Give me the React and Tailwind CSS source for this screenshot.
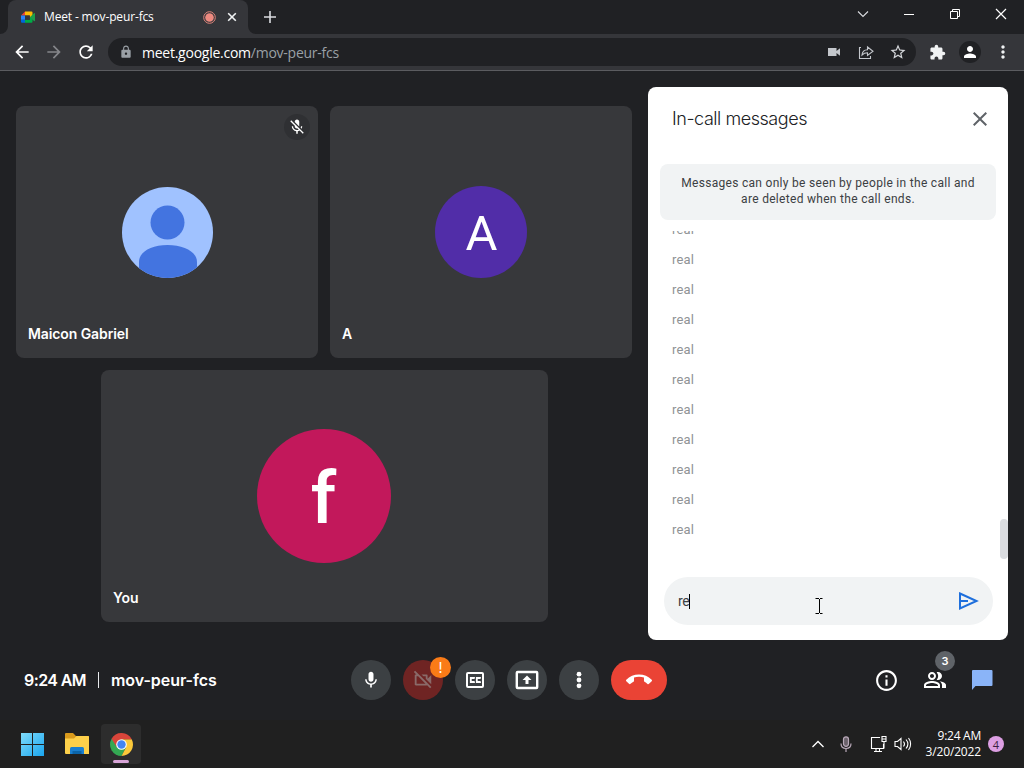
import {
    MdArrowBack,
    MdArrowForward,
    MdCallEnd,
    MdClose,
    MdExtension,
    MdInfoOutline,
    MdLock,
    MdMic,
    MdMicOff,
    MdMoreVert,
    MdOutlinePeopleAlt,
    MdOutlineVideocamOff,
    MdPerson,
    MdRefresh,
    MdStarBorder
} from 'react-icons/md';

const messages = Array.from({ length: 11 }, (_, i) => ({ id: i, text: 'real' }));

const MeetLogo = () => (
    <svg className="w-4 h-4" viewBox="0 0 16 16">
        <path d="M1 6.500 5 2.500v4z" fill="#ea4335" />
        <path d="M5 2.500h6.500a1 1 0 0 1 1 1v3L9.800 9V6.500H5z" fill="#fbbc04" />
        <path d="M1 6.500h4v4.300H1z" fill="#2684fc" />
        <path d="M1 10.800h4v3H2a1 1 0 0 1-1-1z" fill="#0066da" />
        <path d="M5 10.800h4.800V8l2.700 2v2.800a1 1 0 0 1-1 1H5z" fill="#00ac47" />
        <path d="m9.800 8.200 4.200-4c.5-.4 1-.2 1 .4v7c0 .6-.5.800-1 .4z" fill="#1e9e4a" />
        <path d="M5 6.500h4.800v4.300H5z" fill="#35363a" />
    </svg>
);

const TabStrip = () => (
    <div className="h-[34px] flex items-stretch bg-[#202124] font-['Open_Sans',sans-serif]">
        <div className="relative ml-2 w-60 flex items-center bg-[#35363a] rounded-t-lg pl-3 pr-2 text-white">
            <svg className="absolute -left-2 bottom-0 w-2 h-2" viewBox="0 0 8 8">
                <path d="M8 0v8H0a8 8 0 0 0 8-8z" fill="#35363a" />
            </svg>
            <svg className="absolute -right-2 bottom-0 w-2 h-2" viewBox="0 0 8 8">
                <path d="M0 0v8h8a8 8 0 0 1-8-8z" fill="#35363a" />
            </svg>
            <MeetLogo />
            <span className="ml-2 flex-1 text-[12px] tracking-[-0.15px] whitespace-nowrap">Meet - mov-peur-fcs</span>
            <svg className="mr-2 w-[13px] h-[13px]" viewBox="0 0 13 13">
                <circle cx="6.500" cy="6.500" r="5.800" fill="none" stroke="#e0857c" />
                <circle cx="6.500" cy="6.500" r="4.300" fill="#ee8a80" />
            </svg>
            <svg className="w-4 h-4" viewBox="0 0 16 16" fill="none" stroke="#f1f3f4" strokeWidth="1.600">
                <path d="m4.200 4.200 7.600 7.600m0-7.600-7.600 7.600" />
            </svg>
        </div>
        <svg className="ml-[14px] mt-[9px] w-4 h-4" viewBox="0 0 16 16" fill="none" stroke="#dadce0" strokeWidth="1.600">
            <path d="M8 2v12M2 8h12" />
        </svg>
        <div className="ml-auto flex text-white">
            <svg className="w-[46px] h-7" viewBox="0 0 46 28" fill="none" stroke="#dadce0" strokeWidth="1.100">
                <path d="m18 11.500 5 5 5-5" />
            </svg>
            <svg className="w-[46px] h-7" viewBox="0 0 46 28" fill="none" stroke="currentColor">
                <path d="M18 14.500h10" />
            </svg>
            <svg className="w-[46px] h-7" viewBox="0 0 46 28" fill="none" stroke="currentColor">
                <path d="M18.500 11.500h7v7h-7zM20.500 11.500v-2h7v7h-2" />
            </svg>
            <svg className="w-[46px] h-7" viewBox="0 0 46 28" fill="none" stroke="currentColor" strokeWidth="1.200">
                <path d="m18 9 10 10m0-10L18 19" />
            </svg>
        </div>
    </div>
);

const Toolbar = () => (
    <div className="h-[37px] flex items-center bg-[#35363a] border-b border-[#5b5c60] pl-3 font-['Open_Sans',sans-serif]">
        <MdArrowBack className="w-5 h-5 text-white" />
        <MdArrowForward className="ml-3 w-5 h-5 text-[#85868a]" />
        <MdRefresh className="ml-3 w-5 h-5 text-white" />
        <div className="ml-3 w-[808px] h-7 shrink-0 flex items-center rounded-full bg-[#202124] pl-[11px] pr-[9px]">
            <MdLock className="w-[14px] h-[14px] text-[#9aa0a6]" />
            <span className="ml-[9px] flex-1 text-[14px] tracking-[-0.25px] text-[#9aa0a6] whitespace-nowrap">
                <span className="text-white">meet.google.com</span>/mov-peur-fcs
            </span>
            <svg className="w-4 h-4" viewBox="0 0 16 16" fill="#c4c7cc">
                <path d="M2 4h8.500v3L14 4.300v7.400L10.500 9v3H2z" />
            </svg>
            <svg className="ml-4 w-4 h-4" viewBox="0 0 16 16" fill="none" stroke="#c4c7cc" strokeWidth="1.100">
                <path d="M3 3.500H1.500v11h11V12" />
                <path d="M4 11c.3-3.500 2-5.200 5.500-5.300V3L15 7.300l-5.500 4.200V8.800C7 8.800 5.500 9.500 4 11z" />
            </svg>
            <MdStarBorder className="ml-[15px] w-[18px] h-[18px] text-[#d5d7db]" />
        </div>
        <MdExtension className="ml-[13px] w-[17px] h-[17px] text-[#f1f3f4]" />
        <span className="ml-[13px] w-[22px] h-[22px] rounded-full bg-[#202124] flex items-center justify-center">
            <MdPerson className="w-[18px] h-[18px] text-white" />
        </span>
        <MdMoreVert className="ml-3 w-5 h-5 shrink-0 text-[#f1f3f4]" />
    </div>
);

const Tile = ({ name, className, children }) => (
    <div className={`relative h-[252px] rounded-lg bg-[#37383b] flex items-center justify-center ${className}`}>
        {children}
        <span className="absolute left-3 bottom-[14px] text-[14px] leading-5 font-semibold text-white tracking-[-0.1px]">{name}</span>
    </div>
);

const Participants = () => (
    <div className="w-[616px] pt-[19px]">
        <div className="flex gap-3">
            <Tile name="Maicon Gabriel" className="w-[302px]">
                <svg className="w-[91px] h-[91px]" viewBox="0 0 91 91">
                    <defs>
                        <clipPath id="person-clip">
                            <circle cx="45.500" cy="45.500" r="45.500" />
                        </clipPath>
                    </defs>
                    <g clipPath="url(#person-clip)">
                        <rect width="91" height="91" fill="#a0c2ff" />
                        <circle cx="45.500" cy="35.500" r="17" fill="#4374e0" />
                        <path d="M17 91V75c0-10 12-17 28.500-17S75 65 75 75v16z" fill="#4374e0" />
                    </g>
                </svg>
                <span className="absolute top-2 right-2 w-[26px] h-[26px] rounded-full bg-[#2f3033] flex items-center justify-center">
                    <MdMicOff className="w-[18px] h-[18px] text-white" />
                </span>
            </Tile>
            <Tile name="A" className="w-[302px]">
                <span className="w-[92px] h-[92px] pt-[2px] pl-[1px] rounded-full bg-[#512da8] flex items-center justify-center text-white text-[49px] leading-none font-['Roboto',sans-serif]">
                    A
                </span>
            </Tile>
        </div>
        <Tile name="You" className="mt-3 ml-[85px] w-[447px] pr-[2px]">
            <span className="w-[134px] h-[134px] pt-[5px] rounded-full bg-[#c2185b] flex items-center justify-center text-white text-[73px] leading-none font-medium font-['Roboto',sans-serif]">
                f
            </span>
        </Tile>
    </div>
);

const ChatPanel = () => (
    <div className="relative ml-4 w-[360px] h-[553px] rounded-lg bg-white font-['Roboto',sans-serif] flex flex-col">
        <div className="h-[77px] pt-5 pl-6 pr-4 flex items-start justify-between">
            <h2 className="text-[18px] leading-6 font-light text-[#202124] font-['Inter',sans-serif] tracking-[-0.45px]">In-call messages</h2>
            <MdClose className="w-6 h-6 text-[#5f6368]" />
        </div>
        <p className="mx-3 h-14 pt-[11px] rounded-lg bg-[#f1f3f4] text-center text-[12px] leading-4 tracking-[0.3px] text-[#3c4043]">
            Messages can only be seen by people in the call and
            <br />
            are deleted when the call ends.
        </p>
        <div className="mt-[11px] h-[329px] overflow-hidden pl-6 text-[13px] text-[#909396] tracking-[0.2px]">
            <ul className="-mt-[11px]">
                {messages.map((message) => (
                    <li key={message.id} className="h-[30px] leading-5">{message.text}</li>
                ))}
            </ul>
        </div>
        <div className="mt-[17px] ml-4 w-[329px] h-12 rounded-full bg-[#f1f3f4] flex items-center pl-[14px] pr-[14px]">
            <span className="text-[14px] text-[#3c4043] tracking-[-0.4px]">re</span>
            <span className="w-px h-[15px] bg-black" />
            <svg className="ml-auto w-[22px] h-[22px]" viewBox="0 0 22 22" fill="none" stroke="#1f6fdc" strokeWidth="2">
                <path d="M3 3.500 19.500 11 3 18.500zM3 11h8" />
            </svg>
        </div>
        <span className="absolute right-0 top-[432px] w-2 h-10 rounded-l-[4px] rounded-r-sm bg-[#dadce0]" />
        <svg className="absolute left-[167px] top-[511px] w-2 h-4" viewBox="0 0 8 16" fill="none" stroke="#000">
            <path d="M.5.5H4M5 .5h2.500M.5 15.500H4M5 15.500h2.500M4.500 1v14" />
        </svg>
    </div>
);

const RoundButton = ({ children }) => (
    <button type="button" className="w-10 h-10 rounded-full bg-[#3c4043] flex items-center justify-center text-white">
        {children}
    </button>
);

const CallBar = () => (
    <div className="h-20 flex items-center text-white">
        <div className="w-[351px] pl-6 pb-px flex items-center text-[16px] font-semibold">
            <span className="tracking-[-0.6px] whitespace-nowrap">9:24 AM</span>
            <span className="ml-3 w-px h-4 bg-[#e8eaed]" />
            <span className="ml-3 tracking-[-0.05px] whitespace-nowrap">mov-peur-fcs</span>
        </div>
        <div className="flex gap-3">
            <RoundButton>
                <MdMic className="w-5 h-5" />
            </RoundButton>
            <button type="button" className="relative w-10 h-10 rounded-full bg-[#6f2423] flex items-center justify-center text-[#8a6a69]">
                <MdOutlineVideocamOff className="w-[22px] h-[22px]" />
                <span className="absolute left-[27px] -top-[3px] w-[21px] h-[21px] rounded-full bg-[#fa7b17] flex items-center justify-center text-[14px] leading-none text-white">!</span>
            </button>
            <RoundButton>
                <svg className="w-6 h-6" viewBox="0 0 24 24" fill="none" stroke="currentColor" strokeWidth="2">
                    <rect x="4" y="5" width="16" height="14" rx="1" />
                    <path d="M11 10.800V10H7.800v4H11v-.8M17 10.800V10h-3.200v4H17v-.8" strokeWidth="1.800" />
                </svg>
            </RoundButton>
            <RoundButton>
                <svg className="w-6 h-6" viewBox="0 0 24 24" fill="none" stroke="currentColor" strokeWidth="2.400">
                    <rect x="1.800" y="4" width="20.400" height="16" rx=".8" />
                    <path d="m12 7.500 4.500 4.500H13.500v4h-3v-4H7.500z" fill="currentColor" stroke="none" />
                </svg>
            </RoundButton>
            <RoundButton>
                <svg className="w-6 h-6" viewBox="0 0 24 24" fill="currentColor">
                    <circle cx="12" cy="6.200" r="2.400" />
                    <circle cx="12" cy="12" r="2.400" />
                    <circle cx="12" cy="17.800" r="2.400" />
                </svg>
            </RoundButton>
            <button type="button" className="w-14 h-10 rounded-full bg-[#ea4335] flex items-center justify-center">
                <MdCallEnd className="w-[26px] h-[26px]" />
            </button>
        </div>
        <div className="ml-auto pr-[31px] flex items-center gap-6">
            <MdInfoOutline className="w-[25px] h-[25px]" />
            <span className="relative">
                <MdOutlinePeopleAlt className="w-6 h-6" />
                <span className="absolute left-3 -top-[17px] w-5 h-5 rounded-full bg-[#5f6368] flex items-center justify-center text-[11px] font-semibold">3</span>
            </span>
            <svg className="w-[22px] h-[22px]" viewBox="0 0 22 22" fill="#8ab4f8">
                <path d="M2 1h18.500a1 1 0 0 1 1 1v14a1 1 0 0 1-1 1H4.500L1 21V2a1 1 0 0 1 1-1z" />
            </svg>
        </div>
    </div>
);

const ChromeLogo = () => (
    <svg className="w-[23px] h-[23px]" viewBox="0 0 24 24">
        <path d="M12 12v12A12 12 0 0 1 1.610 6z" fill="#34a853" />
        <path d="m7.200 14.800 4.800 9.200 4.800-9.200z" fill="#34a853" />
        <path d="m16.800 14.800-4.800 9.200A12 12 0 0 0 22.650 6.500H12z" fill="#fbc93a" />
        <path d="M12 6.500 7.200 14.800 1.610 6A12 12 0 0 1 22.650 6.500z" fill="#d9453a" />
        <circle cx="12" cy="12" r="5.500" fill="#fff" />
        <circle cx="12" cy="12" r="4.400" fill="#4285f4" />
    </svg>
);

const Taskbar = () => (
    <div className="h-12 flex items-center bg-[#202020] pl-5 pr-5 text-white font-['Open_Sans',sans-serif]">
        <svg className="w-6 h-6" viewBox="0 0 24 24">
            <defs>
                <linearGradient id="win" x1="0" y1="0" x2="1" y2="1" gradientUnits="objectBoundingBox">
                    <stop offset="0" stopColor="#7fdcfb" />
                    <stop offset="1" stopColor="#1aa5ee" />
                </linearGradient>
            </defs>
            <path d="M1 1h11v11H1zM13 1h11v11H13zM1 13h11v11H1zM13 13h11v11H13z" fill="url(#win)" />
        </svg>
        <svg className="ml-5 w-[26px] h-6" viewBox="0 0 26 24">
            <path d="M1 2a1 1 0 0 1 1-1h7l3 3h12a1 1 0 0 1 1 1v5H1z" fill="#d99a1c" />
            <path d="M1 6.500h9L12.500 4H24a1 1 0 0 1 1 1v17H2a1 1 0 0 1-1-1z" fill="#fdd04a" />
            <path d="M6 22v-5.500A1.500 1.500 0 0 1 7.500 15h11a1.500 1.500 0 0 1 1.500 1.500V22z" fill="#1a7fd0" />
            <path d="M8.500 22v-3h9v3z" fill="#0b64a8" />
        </svg>
        <div className="relative ml-[11px] w-10 h-10 rounded bg-[#2d2d2d] flex items-center justify-center">
            <ChromeLogo />
            <span className="absolute bottom-[1px] left-3 w-4 h-[3px] rounded-full bg-[#d8a5d8]" />
        </div>
        <svg className="ml-auto w-3 h-3" viewBox="0 0 12 12" fill="none" stroke="#fff" strokeWidth="1.300">
            <path d="m.5 9 5.500-5.500L11.500 9" />
        </svg>
        <svg className="ml-[15px] w-[14px] h-4" viewBox="0 0 14 16" fill="none" stroke="#b9a9b9" strokeWidth="1.200">
            <rect x="4.500" y=".8" width="5" height="9.500" rx="2.500" fill="#6b626b" />
            <path d="M2 7.500c0 3 2 5 5 5s5-2 5-5M7 12.500V16" />
        </svg>
        <svg className="ml-[17px] w-[17px] h-4" viewBox="0 0 17 16" fill="none" stroke="#fff" strokeWidth="1.100">
            <path d="M10 1.500H1.500v11h12V8M4 15.500h8M6 12.500v3M9.500 12.500v3M12 .5h4v5h-4zM14 5.500v7M12 3h4" />
        </svg>
        <svg className="ml-[7px] w-[18px] h-4" viewBox="0 0 18 16" fill="none" stroke="#fff" strokeWidth="1.100">
            <path d="M1 5.500h2.500L7 2.500v11l-3.500-3H1zM9.500 5.500c1.200 1.500 1.200 3.500 0 5M12 3.500c2.300 2.700 2.300 6.300 0 9M14.500 2c2.800 3.500 2.800 8.500 0 12" />
        </svg>
        <div className="ml-3 w-[57px] flex flex-col items-end text-[12px] leading-4 tracking-[-0.25px] whitespace-nowrap">
            <span>9:24 AM</span>
            <span className="tracking-[-0.15px]">3/20/2022</span>
        </div>
        <span className="ml-[7px] w-4 h-4 shrink-0 rounded-full bg-[#dd9fe3] flex items-center justify-center text-[11px] leading-none text-[#3b1f3f]">4</span>
    </div>
);

export default function App() {
    return (
        <div className="w-[1024px] h-[768px] overflow-hidden flex flex-col bg-[#202124] font-['Inter',sans-serif]">
            <TabStrip />
            <Toolbar />
            <div className="h-[569px] pl-4 pt-4 flex">
                <Participants />
                <ChatPanel />
            </div>
            <CallBar />
            <Taskbar />
        </div>
    );
}
